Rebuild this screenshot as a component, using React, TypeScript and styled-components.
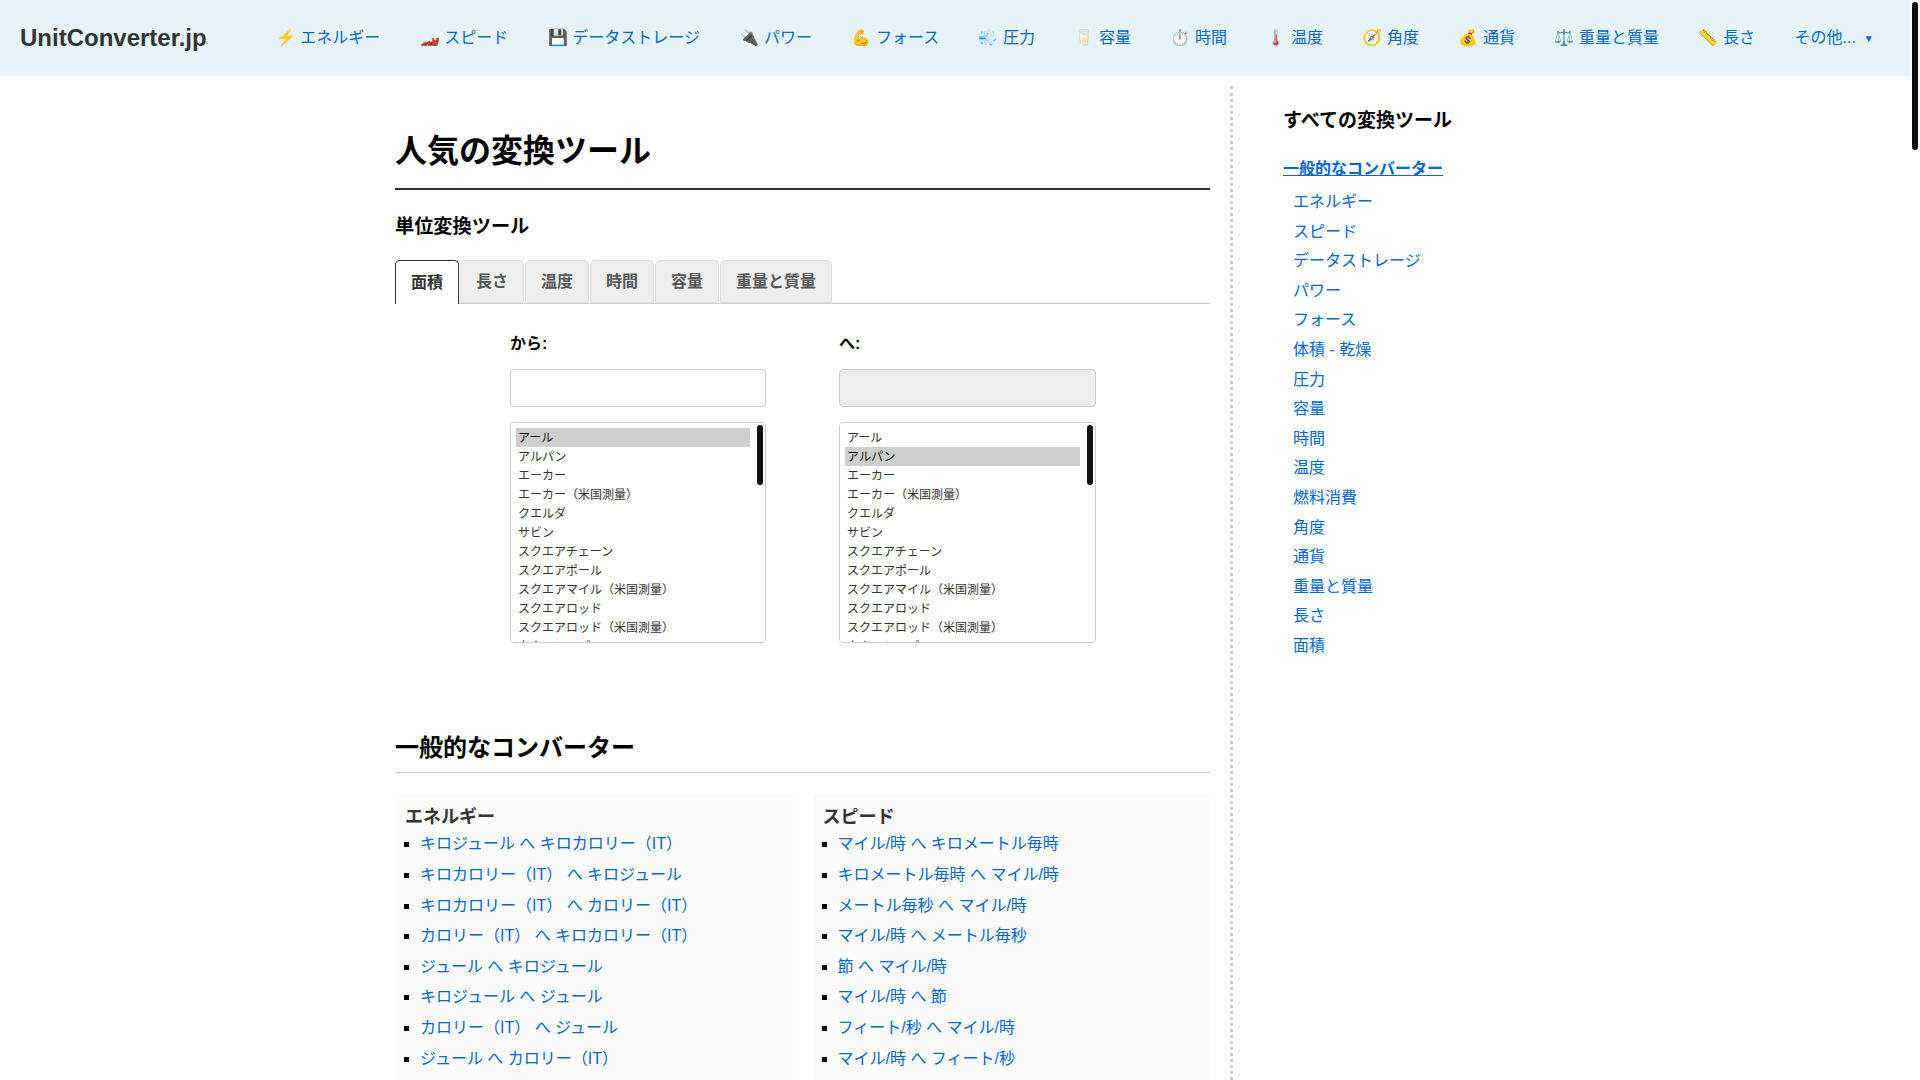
import React from 'react';
import styled, { createGlobalStyle } from 'styled-components';

const Global = createGlobalStyle`
  body {
    margin: 0 10px 0 0;
    background: #fff;
    color: #333;
    font-family: "Liberation Sans", "Noto Sans CJK JP", "Noto Color Emoji", sans-serif;
    font-size: 16px;
    line-height: 1.6;
  }
`;

const PageThumb = styled.div`
  position: fixed;
  top: 2px;
  right: 2px;
  width: 6px;
  height: 148px;
  border-radius: 3px;
  background: #111;
`;
const Header = styled.header`
  display: flex;
  align-items: center;
  height: 76px;
  padding: 0 20px;
  background: #e6f3f9;
`;
const Logo = styled.a`
  font-size: 24px;
  font-weight: 700;
  color: #333;
  text-decoration: none;
  margin-right: 49.5px;
`;
const Nav = styled.nav`
  display: flex;
  align-items: center;
`;
const NavLink = styled.a`
  color: #0066cc;
  text-decoration: none;
  padding: 0 19.8px;
  white-space: nowrap;
`;
const Caret = styled.span`
  font-size: 10px;
  margin-left: 8px;
  vertical-align: 1px;
`;
const Layout = styled.div`
  display: flex;
  margin-top: 10px;
  padding-left: 395px;
`;
const Main = styled.main`
  width: 815px;
  flex: none;
`;
const Title = styled.h1`
  margin: 40px 0 0;
  padding-bottom: 11px;
  border-bottom: 2px solid #333;
  font-size: 32px;
  color: #000;
`;
const SubTitle = styled.h3`
  margin: 22px 0 17px;
  font-size: 19.2px;
  color: #000;
`;
const Tabs = styled.div`
  display: flex;
  gap: 1px;
  height: 43px;
  border-bottom: 1px solid #ccc;
`;
const Tab = styled.button<{ $active?: boolean }>`
  height: ${p => (p.$active ? '44px' : '43px')};
  padding: 0 15px;
  font: inherit;
  font-weight: 700;
  color: ${p => (p.$active ? '#333' : '#555')};
  background: ${p => (p.$active ? '#fff' : '#eee')};
  border: 1px solid ${p => (p.$active ? '#333' : '#ddd')};
  border-bottom: ${p => (p.$active ? '0' : '1px solid #ddd')};
  border-radius: 5px 5px 0 0;
`;
const Converter = styled.div`
  display: flex;
  gap: 73px;
  margin-top: 27px;
  padding-left: 115px;
`;
const Col = styled.div<{ $wide?: boolean }>`
  width: ${p => (p.$wide ? '257px' : '256px')};
`;
const FieldLabel = styled.label`
  display: block;
  font-weight: 700;
  color: #000;
  margin-bottom: 12.5px;
`;
const NumInput = styled.input`
  display: block;
  width: 100%;
  height: 38px;
  box-sizing: border-box;
  border: 1px solid #ccc;
  border-radius: 4px;
  background: ${p => (p.disabled ? '#eee' : '#fff')};
`;
const ListBox = styled.div`
  position: relative;
  margin-top: 15px;
`;
const UnitList = styled.select`
  display: block;
  width: 100%;
  height: 221px;
  padding: 5px 15px 5px 5px;
  box-sizing: border-box;
  border: 1px solid #ccc;
  border-radius: 4px;
  background: #fff;
  font-family: inherit;
  font-size: 12px;
  color: #333;
  outline: none;
`;
const UnitOption = styled.option`
  padding: 0 2px 2px;
`;
const ListThumb = styled.div`
  position: absolute;
  top: 3px;
  right: 3px;
  width: 6px;
  height: 60px;
  border-radius: 3px;
  background: #111;
`;
const SectionTitle = styled.h2`
  margin: 86px 0 20px;
  padding-bottom: 5px;
  border-bottom: 1px solid #ccc;
  font-size: 24px;
  color: #000;
`;
const Cards = styled.div`
  display: grid;
  grid-template-columns: 1fr 1fr;
  gap: 20px;
`;
const Card = styled.section`
  padding: 11px 10px 10px;
  background: #fbfbfb;
  border-radius: 5px;
`;
const CardTitle = styled.h4`
  margin: 0;
  font-size: 18px;
  line-height: 27px;
  color: #333;
`;
const LinkList = styled.ul`
  margin: 0;
  padding-left: 15px;
  list-style: square;
  color: #000;
`;
const LinkItem = styled.li`
  margin-bottom: 5px;
`;
const TextLink = styled.a`
  color: #0066cc;
  text-decoration: none;
`;
const Sidebar = styled.aside`
  flex: none;
  width: 300px;
  margin-left: 20px;
  padding-left: 50px;
  border-left: 3px dotted #ccc;
`;
const SideTitle = styled.h3`
  margin: 19.5px 0 0;
  font-size: 19px;
  color: #000;
`;
const SideHead = styled.a`
  display: block;
  margin-top: 20.5px;
  font-weight: 700;
  color: #0066cc;
  text-decoration: underline;
`;
const SideList = styled.ul`
  margin: 7px 0 0;
  padding: 0 0 0 10px;
  list-style: none;
`;
const SideItem = styled.li`
  margin-bottom: 4px;
`;

const navItems = [
  '⚡ エネルギー', '🏎️ スピード', '💾 データストレージ', '🔌 パワー', '💪 フォース', '💨 圧力',
  '🥛 容量', '⏱️ 時間', '🌡️ 温度', '🧭 角度', '💰 通貨', '⚖️ 重量と質量', '📏 長さ',
];
const tabs = ['面積', '長さ', '温度', '時間', '容量', '重量と質量'];
const units = [
  'アール', 'アルパン', 'エーカー', 'エーカー（米国測量）', 'クエルダ', 'サビン', 'スクエアチェーン', 'スクエアポール',
  'スクエアマイル（米国測量）', 'スクエアロッド', 'スクエアロッド（米国測量）', 'タウンシップ', 'ダナム', 'バーン', 'ハイド',
  'ピン', 'ヘクタール', 'ルード', '円形インチ', '円形ミル', '平方インチ', '平方キロメートル', '平方センチメートル',
  '平方デシメートル', '平方フィート', '平方マイル', '平方ミリメートル', '平方メートル', '平方ヤード',
];
const energy = [
  'キロジュール へ キロカロリー（IT）', 'キロカロリー（IT） へ キロジュール', 'キロカロリー（IT） へ カロリー（IT）',
  'カロリー（IT） へ キロカロリー（IT）', 'ジュール へ キロジュール', 'キロジュール へ ジュール',
  'カロリー（IT） へ ジュール', 'ジュール へ カロリー（IT）',
];
const speed = [
  'マイル/時 へ キロメートル毎時', 'キロメートル毎時 へ マイル/時', 'メートル毎秒 へ マイル/時', 'マイル/時 へ メートル毎秒',
  '節 へ マイル/時', 'マイル/時 へ 節', 'フィート/秒 へ マイル/時', 'マイル/時 へ フィート/秒',
];
const sideItems = [
  'エネルギー', 'スピード', 'データストレージ', 'パワー', 'フォース', '体積 - 乾燥', '圧力', '容量', '時間', '温度',
  '燃料消費', '角度', '通貨', '重量と質量', '長さ', '面積',
];

const LinkCard = ({ title, items }: { title: string; items: string[] }) => (
  <Card>
    <CardTitle>{title}</CardTitle>
    <LinkList>
      {items.map(t => (
        <LinkItem key={t}><TextLink href="#">{t}</TextLink></LinkItem>
      ))}
    </LinkList>
  </Card>
);

const UnitColumn = ({ label, selected, disabled }: { label: string; selected: string; disabled?: boolean }) => (
  <Col $wide={disabled}>
    <FieldLabel>{label}</FieldLabel>
    <NumInput type="text" disabled={disabled} />
    <ListBox>
      <UnitList size={12} defaultValue={selected}>
        {units.map(u => <UnitOption key={u} value={u}>{u}</UnitOption>)}
      </UnitList>
      <ListThumb />
    </ListBox>
  </Col>
);

export default function App() {
  return (
    <>
      <Global />
      <PageThumb />
      <Header>
        <Logo href="#">UnitConverter.jp</Logo>
        <Nav>
          {navItems.map(n => <NavLink key={n} href="#">{n}</NavLink>)}
          <NavLink href="#">その他...<Caret>▼</Caret></NavLink>
        </Nav>
      </Header>
      <Layout>
        <Main>
          <Title>人気の変換ツール</Title>
          <SubTitle>単位変換ツール</SubTitle>
          <Tabs>
            {tabs.map((t, i) => <Tab key={t} $active={i === 0}>{t}</Tab>)}
          </Tabs>
          <Converter>
            <UnitColumn label="から:" selected="アール" />
            <UnitColumn label="へ:" selected="アルパン" disabled />
          </Converter>
          <SectionTitle>一般的なコンバーター</SectionTitle>
          <Cards>
            <LinkCard title="エネルギー" items={energy} />
            <LinkCard title="スピード" items={speed} />
          </Cards>
        </Main>
        <Sidebar>
          <SideTitle>すべての変換ツール</SideTitle>
          <SideHead href="#">一般的なコンバーター</SideHead>
          <SideList>
            {sideItems.map(s => (
              <SideItem key={s}><TextLink href="#">{s}</TextLink></SideItem>
            ))}
          </SideList>
        </Sidebar>
      </Layout>
    </>
  );
}
